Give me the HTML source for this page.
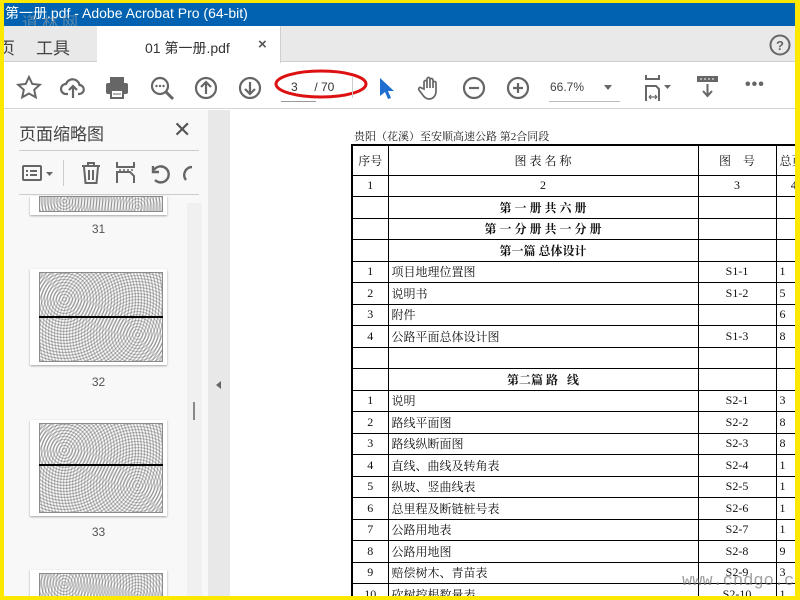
<!DOCTYPE html>
<html><head><meta charset="utf-8"><style>
*{margin:0;padding:0;box-sizing:border-box}
body{width:800px;height:600px;overflow:hidden;background:#ffe800;position:relative;font-family:"Liberation Sans","Noto Sans CJK SC",sans-serif}
.abs{position:absolute}
#app{position:absolute;left:4px;top:3px;width:791px;height:593px;background:#fff;overflow:hidden}
#title{left:0;top:0;width:791px;height:23px;background:#0062b0;color:#fff;font-size:14px;line-height:20px;padding-left:1px}
#tabs{left:0;top:23px;width:791px;height:36px;background:#e9e9e9;border-bottom:1px solid #cfcfcf}
#tb{left:0;top:60px;width:791px;height:46px;background:#fff;border-bottom:1px solid #d6d6d6}
.ic{position:absolute;top:12px}
#panel{left:0;top:107px;width:204px;height:486px;background:#f8f8f8}
#sep{left:204px;top:107px;width:22px;height:486px;background:#e8e8e8}
#doc{left:226px;top:107px;width:565px;height:486px;background:#fff;overflow:hidden}
.th{position:absolute;left:26px;width:137px;background:#fff;box-shadow:0 1px 2px rgba(0,0,0,.35)}
.map{position:absolute;left:9px;top:3px;right:4px;bottom:3px;border:1px solid #777;
background:repeating-radial-gradient(circle at 20% 30%,#fff 0 1px,#999 2px,#fff 3px),repeating-radial-gradient(circle at 80% 70%,#fff 0 1px,#aaa 2px,#fff 3px);background-blend-mode:multiply;opacity:.85}
.lbl{position:absolute;left:26px;width:137px;text-align:center;font-size:12px;color:#555}
table{border-collapse:collapse;table-layout:fixed;width:460px;position:absolute;left:121px;top:34px;font-family:"Liberation Serif","Noto Serif CJK SC",serif;font-size:12px;color:#111}
td{border:1px solid #000;height:21.5px;padding:0 3px;text-align:center;white-space:nowrap;overflow:hidden}
td.l{text-align:left}
td.b{font-weight:bold}
</style></head><body>
<div id="app">
<div id="title" class="abs">第一册.pdf - Adobe Acrobat Pro (64-bit)</div>
<div class="abs" style="left:18px;top:6px;font-size:16px;color:rgba(150,160,170,.6);letter-spacing:4px">道林网</div>
<div id="tabs" class="abs">
 <div class="abs" style="left:-6px;top:8px;font-size:17px;color:#444">页</div>
 <div class="abs" style="left:32px;top:8px;font-size:17px;color:#444">工具</div>
 <div class="abs" style="left:93px;top:0;width:184px;height:37px;background:#fff;border-right:1px solid #d0d0d0"></div>
 <div class="abs" style="left:141px;top:12px;font-size:14px;color:#333">01 第一册.pdf</div>
 <div class="abs" style="left:254px;top:10px;font-size:15px;color:#555;font-weight:bold">×</div>
 <svg class="abs" style="left:765px;top:8px" width="22" height="22"><circle cx="11" cy="11" r="9.5" fill="none" stroke="#666" stroke-width="2"/><text x="11" y="16" text-anchor="middle" font-size="13" font-weight="bold" fill="#666" font-family="Liberation Sans">?</text></svg>
</div>
<div id="tb" class="abs">
 <svg class="ic" style="left:12px" width="26" height="26"><path d="M13 2l3.3 7 7.5.8-5.6 5 1.6 7.5L13 18.5 6.2 22.3l1.6-7.5-5.6-5 7.5-.8z" fill="none" stroke="#666" stroke-width="2"/></svg>
 <svg class="ic" style="left:56px" width="26" height="26"><path d="M8 19H6a5 5 0 0 1 0-10 7 7 0 0 1 13.5 1A4.5 4.5 0 0 1 19 19h-1M13 23V11M9 15l4-4 4 4" fill="none" stroke="#666" stroke-width="2.2"/></svg>
 <svg class="ic" style="left:100px" width="26" height="26"><rect x="6" y="2" width="14" height="6" fill="#666"/><rect x="2" y="8" width="22" height="11" rx="2" fill="#666"/><rect x="7" y="15" width="12" height="8" fill="#fff" stroke="#666" stroke-width="2"/><line x1="9" y1="19" x2="17" y2="19" stroke="#666"/></svg>
 <svg class="ic" style="left:145px" width="26" height="26"><circle cx="11" cy="11" r="8" fill="none" stroke="#666" stroke-width="2.2"/><path d="M17 17l7 7" stroke="#666" stroke-width="3"/><circle cx="7.5" cy="11" r="1.2" fill="#666"/><circle cx="11" cy="11" r="1.2" fill="#666"/><circle cx="14.5" cy="11" r="1.2" fill="#666"/></svg>
 <svg class="ic" style="left:189px" width="26" height="26"><circle cx="13" cy="13" r="10" fill="none" stroke="#666" stroke-width="2.2"/><path d="M13 19V7M8 12l5-5 5 5" fill="none" stroke="#666" stroke-width="2.2"/></svg>
 <svg class="ic" style="left:233px" width="26" height="26"><circle cx="13" cy="13" r="10" fill="none" stroke="#666" stroke-width="2.2"/><path d="M13 7v12M8 14l5 5 5-5" fill="none" stroke="#666" stroke-width="2.2"/></svg>
 <div class="abs" style="left:277px;top:19px;width:35px;border-bottom:1px solid #999;height:20px"></div>
 <div class="abs" style="left:287px;top:17px;font-size:12px;color:#333">3&nbsp;&nbsp;&nbsp;&nbsp;&nbsp;/ 70</div>
 <svg class="abs" style="left:268px;top:3px" width="100" height="36"><ellipse cx="49" cy="18" rx="45" ry="13" fill="none" stroke="#d11" stroke-width="3"/></svg>
 <div class="abs" style="left:348px;top:13px;width:1px;height:22px;background:#ccc"></div>
 <svg class="ic" style="left:372px" width="20" height="26"><path d="M4 3v18l5-4 3 7 3-1-3-7h6z" fill="#1e6fd0"/></svg>
 <svg class="ic" style="left:413px" width="26" height="26"><path d="M7 14V7a1.5 1.5 0 0 1 3 0v6V4a1.5 1.5 0 0 1 3 0v9V5a1.5 1.5 0 0 1 3 0v8V8a1.5 1.5 0 0 1 3 0v8c0 5-3 8-7 8-3 0-5-2-7-5l-3-4a1.5 1.5 0 0 1 2.5-2z" fill="none" stroke="#666" stroke-width="1.7"/></svg>
 <svg class="ic" style="left:457px" width="26" height="26"><circle cx="13" cy="13" r="10" fill="none" stroke="#666" stroke-width="2.2"/><path d="M8 13h10" stroke="#666" stroke-width="2.2"/></svg>
 <svg class="ic" style="left:501px" width="26" height="26"><circle cx="13" cy="13" r="10" fill="none" stroke="#666" stroke-width="2.2"/><path d="M8 13h10M13 8v10" stroke="#666" stroke-width="2.2"/></svg>
 <div class="abs" style="left:546px;top:17px;font-size:12px;color:#444">66.7%</div>
 <div class="abs" style="left:600px;top:22px;border:4px solid transparent;border-top:5px solid #666"></div>
 <div class="abs" style="left:545px;top:38px;width:71px;height:1px;background:#bbb"></div>
 <svg class="ic" style="left:637px;top:10px" width="36" height="30"><path d="M5 2v4h13V2M5 28V13h10l3 3v12" fill="none" stroke="#666" stroke-width="2"/><path d="M8 24h8M8 24l2-2M8 24l2 2M16 24l-2-2M16 24l-2 2" stroke="#666" stroke-width="1.2"/><path d="M23 12h7l-3.5 4z" fill="#666"/></svg>
 <svg class="ic" style="left:692px;top:10px" width="24" height="28"><rect x="1" y="3" width="21" height="6" fill="#666"/><path d="M4 6h2M8 6h2M12 6h2M16 6h2" stroke="#fff"/><path d="M11.5 11v12M7 18l4.5 5 4.5-5" fill="none" stroke="#666" stroke-width="2"/></svg>
 <div class="abs" style="left:741px;top:13px;font-size:16px;color:#666;letter-spacing:1px;font-weight:bold">•••</div>
</div>
<div id="panel" class="abs">
 <div class="abs" style="left:15px;top:10px;font-size:17px;color:#444">页面缩略图</div>
 <div class="abs" style="left:169px;top:7px;font-size:22px;color:#555">✕</div>
 <div class="abs" style="left:15px;top:40px;width:180px;height:1px;background:#ccc"></div>
 <svg class="abs" style="left:17px;top:53px" width="40" height="22"><rect x="2" y="3" width="18" height="14" rx="1" fill="none" stroke="#666" stroke-width="2"/><path d="M5 8h2M5 12h2M9 8h7M9 12h7" stroke="#666" stroke-width="2"/><path d="M25 9h7l-3.5 4z" fill="#666"/></svg>
 <div class="abs" style="left:59px;top:50px;width:1px;height:26px;background:#ccc"></div>
 <svg class="abs" style="left:76px;top:51px" width="22" height="24"><path d="M2 5h18M8 5V2h6v3M4 6l1.5 16h11L18 6M9 9v10M13 9v10" fill="none" stroke="#666" stroke-width="2"/></svg>
 <svg class="abs" style="left:111px;top:51px" width="22" height="24"><path d="M2 1v5h17V1M2 22V11h13l4 4v7" fill="none" stroke="#666" stroke-width="2"/><path d="M4 9h2M8 9h2M12 9h2M16 9h2" stroke="#666" stroke-width="1.5"/></svg>
 <svg class="abs" style="left:145px;top:53px" width="22" height="22"><path d="M6 17a8 8 0 1 0-1-10M4 3v6h6" fill="none" stroke="#666" stroke-width="2.4"/></svg>
 <svg class="abs" style="left:176px;top:53px" width="20" height="22"><path d="M12 4a8 8 0 0 0-6 13" fill="none" stroke="#666" stroke-width="2.4"/></svg>
 <div class="abs" style="left:15px;top:84px;width:180px;height:1px;background:#ccc"></div>
 <div class="abs" style="left:183px;top:93px;width:15px;height:393px;background:#f0f0f0"></div>
 <div class="abs" style="left:189px;top:292px;width:2px;height:18px;background:#888"></div>
 <div class="th" style="top:86px;height:19px"><div class="map" style="top:0"></div></div>
 <div class="lbl" style="top:112px">31</div>
 <div class="th" style="top:159px;height:96px"><div class="map"></div><div class="abs" style="left:9px;right:4px;top:47px;height:1.5px;background:#000"></div></div>
 <div class="lbl" style="top:265px">32</div>
 <div class="th" style="top:310px;height:96px"><div class="map"></div><div class="abs" style="left:9px;right:4px;top:44px;height:1.5px;background:#000"></div></div>
 <div class="lbl" style="top:415px">33</div>
 <div class="th" style="top:460px;height:40px"><div class="map"></div></div>
</div>
<div id="sep" class="abs"><div class="abs" style="left:8px;top:271px;border:4px solid transparent;border-right:5px solid #666;border-left:0"></div></div>
<div id="doc" class="abs">
 <div class="abs" style="left:124px;top:18px;font-family:'Liberation Serif','Noto Serif CJK SC',serif;font-size:11px;color:#222">贵阳（花溪）至安顺高速公路 第2合同段</div>
 <table style="border:2px solid #000">
  <colgroup><col style="width:36px"><col style="width:310px"><col style="width:78px"><col style="width:36px"></colgroup>
  <tr style="height:30px"><td>序号</td><td>图 表 名 称</td><td>图&nbsp;&nbsp;&nbsp;&nbsp;号</td><td class="l">总页</td></tr>
  <tr><td>1</td><td>2</td><td>3</td><td>4</td></tr>
  <tr><td></td><td class="b">第 一 册 共 六 册</td><td></td><td></td></tr>
  <tr><td></td><td class="b">第 一 分 册 共 一 分 册</td><td></td><td></td></tr>
  <tr><td></td><td class="b">第一篇 总体设计</td><td></td><td></td></tr>
  <tr><td>1</td><td class="l">项目地理位置图</td><td>S1-1</td><td class="l">1</td></tr>
  <tr><td>2</td><td class="l">说明书</td><td>S1-2</td><td class="l">5</td></tr>
  <tr><td>3</td><td class="l">附件</td><td></td><td class="l">6</td></tr>
  <tr><td>4</td><td class="l">公路平面总体设计图</td><td>S1-3</td><td class="l">8</td></tr>
  <tr><td></td><td></td><td></td><td></td></tr>
  <tr><td></td><td class="b">第二篇 路&nbsp;&nbsp;&nbsp;线</td><td></td><td></td></tr>
  <tr><td>1</td><td class="l">说明</td><td>S2-1</td><td class="l">3</td></tr>
  <tr><td>2</td><td class="l">路线平面图</td><td>S2-2</td><td class="l">8</td></tr>
  <tr><td>3</td><td class="l">路线纵断面图</td><td>S2-3</td><td class="l">8</td></tr>
  <tr><td>4</td><td class="l">直线、曲线及转角表</td><td>S2-4</td><td class="l">1</td></tr>
  <tr><td>5</td><td class="l">纵坡、竖曲线表</td><td>S2-5</td><td class="l">1</td></tr>
  <tr><td>6</td><td class="l">总里程及断链桩号表</td><td>S2-6</td><td class="l">1</td></tr>
  <tr><td>7</td><td class="l">公路用地表</td><td>S2-7</td><td class="l">1</td></tr>
  <tr><td>8</td><td class="l">公路用地图</td><td>S2-8</td><td class="l">9</td></tr>
  <tr><td>9</td><td class="l">赔偿树木、青苗表</td><td>S2-9</td><td class="l">3</td></tr>
  <tr><td>10</td><td class="l">砍树挖根数量表</td><td>S2-10</td><td class="l">1</td></tr>
 </table>
 <div class="abs" style="left:452px;top:462px;font-family:'Liberation Mono',monospace;font-size:17px;color:rgba(120,120,120,.7)">www.cndgo.com</div>
</div>
</div>
</body></html>
